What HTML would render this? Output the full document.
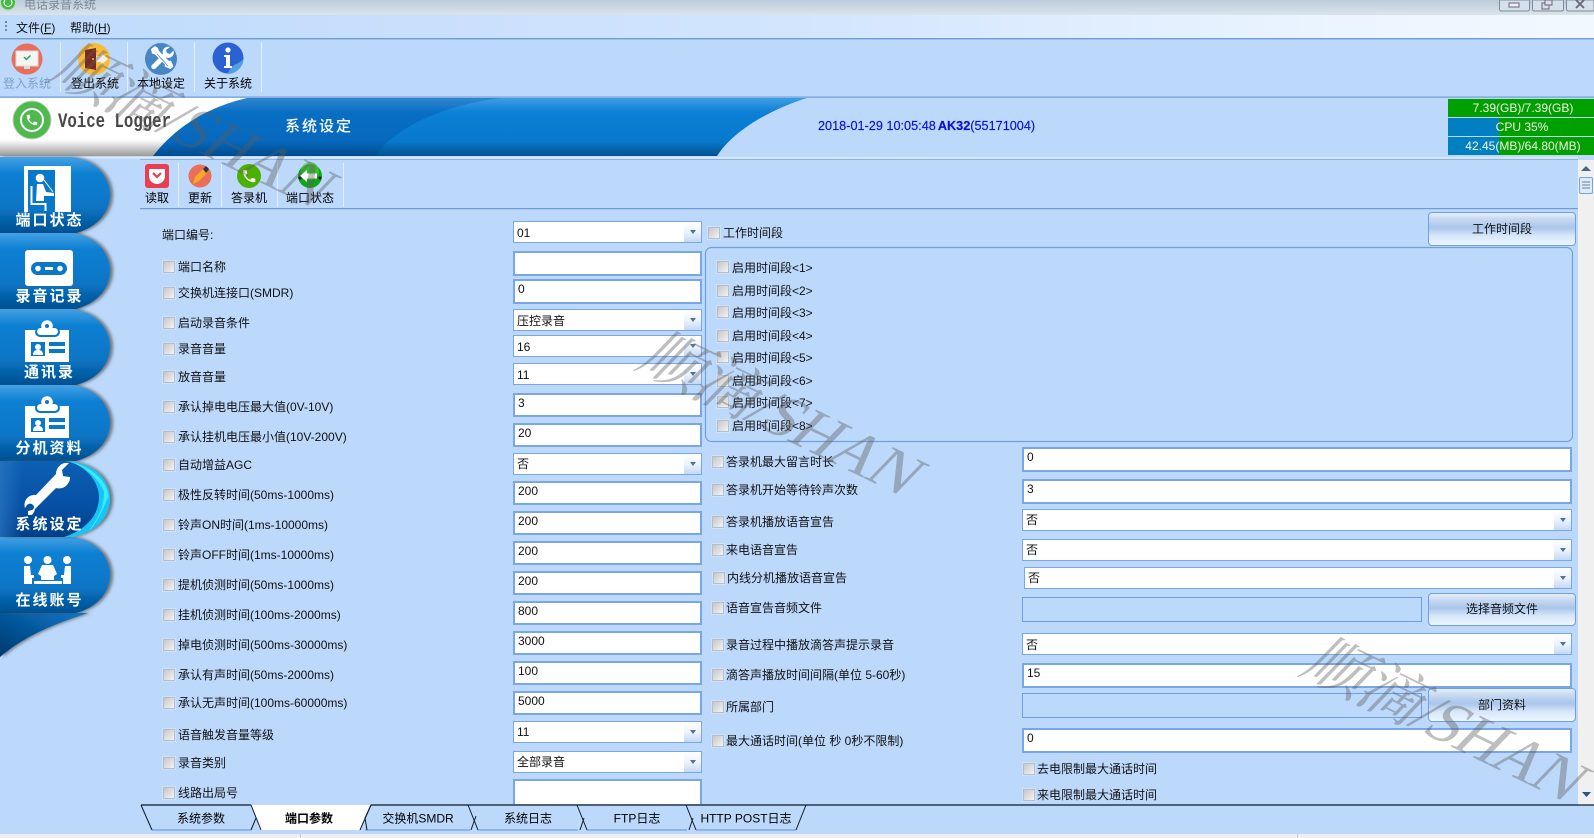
<!DOCTYPE html>
<html lang="zh"><head><meta charset="utf-8"><title>电话录音系统</title>
<style>
html,body{margin:0;padding:0}
body{width:1594px;height:838px;position:relative;overflow:hidden;background:#bcd9fc;font:12px/14px "Liberation Sans","Noto Sans CJK SC",sans-serif;color:#111}
.l{position:absolute;white-space:nowrap;line-height:14px}
.c{position:absolute;width:10px;height:10px;border:1px solid #aebfd6;outline:1px solid #d3e0f2;background:linear-gradient(135deg,#c6c6c6,#f4f4f4)}
.i{position:absolute;box-sizing:border-box;left:513px;width:189px;height:24px;background:#fff;border:2px solid #79a6e6;padding-left:3px;line-height:17px;white-space:nowrap}
.r{left:1022px;width:550px}
.b{border-width:1.5px;height:22px;line-height:21px}
.b:after{content:"";position:absolute;right:0;top:0;bottom:0;width:17px;background:linear-gradient(#fff 0,#edf4fd 50%,#c3d8f5 100%)}
.b:before{content:"";position:absolute;z-index:1;right:5px;top:8px;border:3.5px solid transparent;border-top:4px solid #50709c;border-bottom:0}
.d{background:#bcd9fc;border-width:1.4px;border-color:#6f9fdc}
.btn{position:absolute;box-sizing:border-box;left:1428px;width:148px;border:1px solid #6f9fdc;border-radius:4px;background:linear-gradient(#e6eefa 0,#c6d8f0 20%,#a9c6ec 45%,#d6e6fa 70%,#eef6ff 100%);text-align:center}
svg{position:absolute;left:0;top:0}
</style></head><body>

<svg width="1594" height="838" viewBox="0 0 1594 838" font-family="'Liberation Sans','Noto Sans CJK SC',sans-serif" font-size="12">
<defs>
<linearGradient id="ti" x1="0" y1="0" x2="0" y2="1"><stop offset="0" stop-color="#bccbd9"/><stop offset="1" stop-color="#dbe4ec"/></linearGradient>
<linearGradient id="me" x1="0" y1="0" x2="1" y2="0"><stop offset="0" stop-color="#bedafc"/><stop offset=".5" stop-color="#d2e5fd"/><stop offset=".85" stop-color="#ecf5ff"/><stop offset="1" stop-color="#f2f8ff"/></linearGradient>
<linearGradient id="bl" x1="0" y1="0" x2="0" y2="1"><stop offset="0" stop-color="#3f9ee2"/><stop offset=".25" stop-color="#0b80d6"/><stop offset=".75" stop-color="#0878cc"/><stop offset="1" stop-color="#00538f"/></linearGradient>
<linearGradient id="wh" x1="0" y1="0" x2="0" y2="1"><stop offset="0" stop-color="#fff"/><stop offset=".72" stop-color="#fff"/><stop offset=".85" stop-color="#d0d0d0"/><stop offset="1" stop-color="#9a9a9a"/></linearGradient>
<linearGradient id="tb" x1="0" y1="0" x2="0" y2="1"><stop offset="0" stop-color="#45a2e4"/><stop offset=".22" stop-color="#0b7fd2"/><stop offset=".65" stop-color="#0a76c6"/><stop offset="1" stop-color="#004f90"/></linearGradient>
<linearGradient id="ts" x1="0" y1="0" x2="0" y2="1"><stop offset="0" stop-color="#0c60b4"/><stop offset=".6" stop-color="#0650a4"/><stop offset="1" stop-color="#003e88"/></linearGradient>
<linearGradient id="tsl" x1="0" y1="0" x2="1" y2="0"><stop offset="0" stop-color="#2c78c4" stop-opacity=".7"/><stop offset="1" stop-color="#2c78c4" stop-opacity="0"/></linearGradient>
<linearGradient id="sw" x1="1" y1="0" x2="0" y2="1"><stop offset="0" stop-color="#0b78c8"/><stop offset="1" stop-color="#00386f"/></linearGradient>
<filter id="sh" x="-10%" y="-10%" width="125%" height="120%"><feDropShadow dx="3" dy="0" stdDeviation="1.5" flood-color="#555" flood-opacity=".75"/></filter>
<path id="ph" d="M6.62 10.79c1.44 2.83 3.76 5.14 6.59 6.59l2.2-2.2c.27-.27.67-.36 1.02-.24 1.12.37 2.33.57 3.57.57.55 0 1 .45 1 1V20c0 .55-.45 1-1 1-9.39 0-17-7.61-17-17 0-.55.45-1 1-1h3.5c.55 0 1 .45 1 1 0 1.25.2 2.45.57 3.57.11.35.03.74-.25 1.02l-2.2 2.2z"/>
<path id="tab" d="M0 0H72C96 3 110 20 110 38C110 56 96 71 76 76H0Z"/>
<g id="badge"><rect x="25" y="14" width="44" height="32" fill="#fff"/><rect x="35" y="11" width="25" height="10" rx="5" fill="#0a78c8"/><rect x="37" y="12" width="21" height="7" rx="3.5" fill="#fff"/><circle cx="47" cy="10" r="5.8" fill="#fff"/><circle cx="47" cy="10" r="2" fill="#0a78c8"/><rect x="31" y="26" width="14" height="14" fill="#0a78c8"/><circle cx="38" cy="31" r="3" fill="#fff"/><path d="M33 39c0-4 2-5 5-5s5 1 5 5z" fill="#fff"/><rect x="49" y="26" width="16" height="4" fill="#0a78c8"/><rect x="49" y="33" width="16" height="4" fill="#0a78c8"/></g>
</defs>

<!-- title bar -->
<rect width="1594" height="15" fill="url(#ti)"/>
<circle cx="8" cy="2.500" r="7.500" fill="#48b848" stroke="#b9dcb9"/><circle cx="8" cy="2.500" r="4" fill="none" stroke="#fff"/>
<text x="24" y="8.500" fill="#7c8894">电话录音系统</text>
<g fill="#d6e0ea" stroke="#7d8b9a"><path d="M1499.500 0V9q0 2 2 2h26q2 0 2-2V0z"/><path d="M1532.500 0V9q0 2 2 2h27q2 0 2-2V0z"/><path d="M1566.500 0V9q0 2 2 2H1594V0z"/></g>
<rect x="1509" y="3" width="10" height="4" fill="#eef" stroke="#667"/>
<rect x="1542" y="3" width="7" height="6" fill="none" stroke="#667"/><rect x="1545" y="0" width="7" height="5" fill="#dde" stroke="#667"/>
<path d="M1576 0L1584 8M1584 0L1576 8" stroke="#667" stroke-width="1.800"/>
<!-- menu -->
<rect y="15" width="1594" height="23" fill="url(#me)"/>
<g fill="#6a8ab0"><rect x="5" y="21" width="2" height="2"/><rect x="5" y="25" width="2" height="2"/><rect x="5" y="29" width="2" height="2"/></g>
<text x="16" y="32" fill="#111">文件(<tspan text-decoration="underline">F</tspan>)</text>
<text x="70" y="32" fill="#111">帮助(<tspan text-decoration="underline">H</tspan>)</text>
<rect y="38" width="1594" height="1.400" fill="#6f9bd6"/>
<rect y="96.500" width="1594" height="1.200" fill="#6f9bd6"/>
<!-- toolbar separators -->
<g fill="#e4effd"><rect x="60" y="42" width="1" height="50"/><rect x="127" y="42" width="1" height="50"/><rect x="194" y="42" width="1" height="50"/><rect x="261" y="42" width="1" height="50"/></g>
<!-- icon login -->
<circle cx="27" cy="59" r="15.500" fill="#e8705a"/>
<rect x="16" y="51" width="22" height="15" fill="#f4f4f4" stroke="#d8d8d8"/><rect x="24" y="66" width="6" height="3" fill="#ddd"/><path d="M24 57l2.500 2.500 4-4" fill="none" stroke="#30a060" stroke-width="1.500"/>
<!-- icon logout -->
<circle cx="94" cy="59" r="16" fill="#f9bc36"/>
<path d="M85 50l11-2v22l-11-2z" fill="#7b2a20"/><circle cx="93" cy="59" r="1" fill="#f9bc36"/><path d="M96 56h5v-3l7 6-7 6v-3h-5z" fill="#f4f0e8"/>
<!-- icon tools -->
<circle cx="161" cy="59" r="16" fill="#4786c4"/>
<g fill="#fff"><path d="M170 47a5.500 5.500 0 0 0-7 7l-11 11a2.200 2.200 0 0 0 3.500 3.500l11-11a5.500 5.500 0 0 0 7-7l-3.500 3.500-3-1-1-3z"/><path d="M151 49l4-3 3 2 1 3 10 10 2-0.500 2.500 6-3 2.500-6-2.500 0.500-2-10-10-3-1z"/></g>
<path d="M168 66l-11-12" stroke="#4786c4" stroke-width=".8"/>
<!-- icon info -->
<circle cx="228" cy="58" r="15.500" fill="#2a62d2"/><path d="M228 74c8 0 15-7 15-15c-4 6-12 4-15 15z" fill="#52a0e4"/>
<circle cx="228" cy="50" r="2.600" fill="#fff"/><path d="M224 55h6v11h2v2h-8v-2h2v-9h-2z" fill="#fff"/>
<g text-anchor="middle"><text x="27" y="87.500" fill="#7e9fc6">登入系统</text><text x="95" y="87.500">登出系统</text><text x="161" y="87.500">本地设定</text><text x="228" y="87.500">关于系统</text></g>

<!-- banner -->
<rect x="0" y="98" width="260" height="58" fill="url(#wh)"/>
<path d="M153 156C175 128 205 108 247 98H807C775 108 735 128 717 156Z" fill="url(#bl)"/>
<path d="M153 156C175 128 205 108 247 98H500C440 106 395 128 375 156Z" fill="#00328a" opacity=".22"/>
<circle cx="32" cy="120" r="19" fill="#4fb94f" stroke="#b9dcb9" stroke-width="1"/>
<circle cx="32" cy="120" r="11" fill="none" stroke="#fff" stroke-width="2"/>
<use href="#ph" fill="#fff" transform="translate(25,113) scale(.58)"/>
<text x="58" y="127" font-size="20" font-weight="bold" font-family="'Liberation Mono',monospace" fill="#484848" textLength="113" lengthAdjust="spacingAndGlyphs">Voice Logger</text>
<text x="319" y="131" font-size="15" fill="#fff" text-anchor="middle" letter-spacing="2" font-weight="500">系统设定</text>
<text x="818" y="130" fill="#0d0dd4" font-size="12.700" stroke="#0d0dd4" stroke-width=".15">2018-01-29 10:05:48<tspan font-weight="bold" dx="2">AK32</tspan>(55171004)</text>
<rect x="0" y="157" width="1578" height="1.500" fill="#dfeaf8"/>
<rect x="140" y="159" width="1438" height="1" fill="#8fb2e2"/>

<!-- stats -->
<rect x="1448" y="99" width="146" height="18" fill="#00a000"/>
<rect x="1448" y="118" width="146" height="18" fill="#00a000"/><rect x="1448" y="118" width="51" height="18" fill="#0080c0"/>
<rect x="1448" y="137" width="146" height="18" fill="#00a000"/><rect x="1448" y="137" width="51" height="18" fill="#0080c0"/>
<g fill="#f6f6e8" text-anchor="middle"><text x="1523" y="112">7.39(GB)/7.39(GB)</text><text x="1522" y="131">CPU 35%</text><text x="1523" y="150">42.45(MB)/64.80(MB)</text></g>

<!-- side tabs -->
<path d="M0 613H88C60 622 25 635 0 657Z" fill="url(#sw)" filter="url(#sh)"/>
<g filter="url(#sh)">
<use href="#tab" fill="url(#tb)" y="157"/>
<use href="#tab" fill="url(#tb)" y="233"/>
<use href="#tab" fill="url(#tb)" y="309"/>
<use href="#tab" fill="url(#tb)" y="385"/>
<use href="#tab" fill="url(#tb)" y="537"/>
</g>
<g filter="url(#sh)">
<path d="M0 461H68C96 464 110 481 110 499C110 517 96 532 72 537H0Z" fill="#16c4f6"/>
</g>
<path d="M68 461C92 466 108 482 108.500 497C104 505 100 520 88 532C100 516 104 505 104 492C100 480 85 466 68 461Z" fill="#36eefa"/>
<path d="M0 461H66C86 465 99 482 99 497C99 515 86 530 64 537H0Z" fill="url(#ts)"/>
<rect x="0" y="461" width="22" height="76" fill="url(#tsl)"/>

<!-- tab 1 icon -->
<rect x="24" y="166" width="47" height="46" fill="#fff"/>
<rect x="28" y="170" width="27" height="42" fill="#0a78c8"/>
<circle cx="40" cy="178" r="4.300" fill="#fff"/>
<path d="M37 184h6l3 8 8 1v3H44v5h-8z" fill="#fff"/>
<path d="M31.500 186v18h14v7" fill="none" stroke="#fff" stroke-width="2"/>
<path d="M44 180l9 12" stroke="#fff" fill="none"/>
<!-- tab 2 icon -->
<rect x="25" y="250" width="48" height="36" rx="3" fill="#fff"/>
<rect x="31" y="262" width="36" height="13" rx="6.500" fill="#0a78c8"/>
<circle cx="38" cy="268.500" r="2.800" fill="#fff"/><circle cx="60" cy="268.500" r="2.800" fill="#fff"/><rect x="45" y="267" width="8" height="3" fill="#fff"/>
<!-- tab 3,4 icons -->
<use href="#badge" y="316"/>
<use href="#badge" y="392"/>
<!-- wrench -->
<path d="M70 477a11 11 0 0 1-14 11l-21 21a10 10 0 0 1 -1 3l-2 3 -4 0 0-4 4-1a3 3 0 0 0 1-5a4 4 0 0 0-6 0l-2 3a10 10 0 0 1 11-13l20-21a11 11 0 0 1 13-11l-7 7 1 6 6 1z" fill="#fff"/>
<!-- people -->
<g fill="#fff"><circle cx="28" cy="560" r="4"/><circle cx="47.500" cy="560" r="4"/><circle cx="67" cy="560" r="4"/><path d="M24 566h6l1 9h3v3h-2v6h-8z"/><path d="M71 566h-6l-1 9h-3v3h2v6h8z"/><path d="M42 565h11l4 9-3 2v4H41v-4l-3-2z"/><rect x="34" y="581" width="28" height="3"/></g>
<g fill="#fff" font-size="15" font-weight="bold" text-anchor="middle" letter-spacing="2">
<text x="49.500" y="225">端口状态</text><text x="49.500" y="301">录音记录</text><text x="49.500" y="377">通讯录</text><text x="49.500" y="453">分机资料</text><text x="49.500" y="529">系统设定</text><text x="49.500" y="605">在线账号</text>
</g>

<!-- sub toolbar -->
<rect x="140" y="208" width="1438" height="1.200" fill="#6f9bd6"/>
<g fill="#e4effd"><rect x="178" y="163" width="1" height="44"/><rect x="221" y="163" width="1" height="44"/><rect x="277" y="163" width="1" height="44"/><rect x="343" y="163" width="1" height="44"/></g>
<rect x="145" y="164" width="24" height="24" rx="3" fill="#ec3c52"/>
<path d="M149 169h16v7a8 8 0 0 1-16 0z" fill="#fff"/><path d="M153 173l4 4 4-4" fill="none" stroke="#ec3c52" stroke-width="2.200"/>
<circle cx="200" cy="176" r="11.500" fill="#ea6f59"/>
<path d="M193 184l2-7 8-8 4 4-8 8z" fill="#f8a828"/><path d="M203 169l3-3 3 3-3 4z" fill="#333"/>
<circle cx="249" cy="176" r="12" fill="#4cb000"/>
<use href="#ph" fill="#fff" transform="translate(241,168) scale(.68)"/>
<circle cx="310" cy="176" r="12" fill="#10a818"/><circle cx="310" cy="171" r="9" fill="#50d040" opacity=".6"/>
<path d="M300 176l7-6v3.500h10v5h-10v3.500z" fill="#fff"/><circle cx="300" cy="178" r="1.600" fill="#123"/><circle cx="320" cy="178" r="1.600" fill="#123"/>
<g text-anchor="middle"><text x="157" y="202">读取</text><text x="200" y="202">更新</text><text x="249" y="202">答录机</text><text x="310" y="202">端口状态</text></g>

<!-- work panel -->
<rect x="705.500" y="247.500" width="867" height="194" rx="6" fill="#bcd9fc" stroke="#6f9fdc" stroke-width="1.200"/>

<!-- scrollbar -->
<rect x="1578" y="160" width="16" height="645" fill="#f0f0f0"/>
<path d="M1581 171l5-5 5 5z" fill="#46668c"/>
<rect x="1579.500" y="177.500" width="13" height="16" rx="1.500" fill="#dcebfb" stroke="#7fa3cf"/>
<path d="M1582 182h8M1582 185h8M1582 188h8" stroke="#6a7f98"/>
<path d="M1582 792h9l-4.500 5z" fill="#2a5488"/>

<!-- bottom -->
<rect y="834" width="1594" height="4" fill="#eeeeee"/>
<rect x="300" y="834" width="1" height="4" fill="#ccc"/><rect x="1297" y="834" width="1" height="4" fill="#ccc"/>
<path d="M251 805H371L360 830H260Z" fill="#fff"/>
<path d="M141 805H251M371 805H1594" stroke="#0c1a2c" stroke-width="1.200"/>
<g fill="none" stroke="#5c8fd8" stroke-width="1"><path d="M152 830H251"/><path d="M365 830H470"/><path d="M478 830H578"/><path d="M587 830H687"/><path d="M696 830H796"/></g>
<g fill="none" stroke="#0c1a2c"><path d="M141 805L152 830"/><path d="M251 805L261 830"/><path d="M371 805L360 830"/><path d="M371 805L365 818 367 830"/><path d="M468 805L478 830"/><path d="M471 830L476 816"/><path d="M577 805L587 830"/><path d="M580 830L584 818"/><path d="M686 805L696 830"/><path d="M689 830L693 818"/><path d="M806 805L796 830"/><path d="M251 830L256 818"/></g>
<g text-anchor="middle"><text x="201" y="822.500">系统参数</text><text x="309" y="822.500" font-weight="bold">端口参数</text><text x="418" y="822.500">交换机SMDR</text><text x="528" y="822.500">系统日志</text><text x="637" y="822.500">FTP日志</text><text x="746" y="822.500">HTTP POST日志</text></g>
</svg>

<!-- left labels -->
<div class="l" style="left:162px;top:228px">端口编号:</div>
<i class="c" style="left:163px;top:261px"></i><div class="l" style="left:178px;top:260px">端口名称</div>
<i class="c" style="left:163px;top:287px"></i><div class="l" style="left:178px;top:286px">交换机连接口(SMDR)</div>
<i class="c" style="left:163px;top:317px"></i><div class="l" style="left:178px;top:316px">启动录音条件</div>
<i class="c" style="left:163px;top:343px"></i><div class="l" style="left:178px;top:342px">录音音量</div>
<i class="c" style="left:163px;top:371px"></i><div class="l" style="left:178px;top:370px">放音音量</div>
<i class="c" style="left:163px;top:401px"></i><div class="l" style="left:178px;top:400px">承认掉电电压最大值(0V-10V)</div>
<i class="c" style="left:163px;top:431px"></i><div class="l" style="left:178px;top:430px">承认挂机电压最小值(10V-200V)</div>
<i class="c" style="left:163px;top:459px"></i><div class="l" style="left:178px;top:458px">自动增益AGC</div>
<i class="c" style="left:163px;top:489px"></i><div class="l" style="left:178px;top:488px">极性反转时间(50ms-1000ms)</div>
<i class="c" style="left:163px;top:519px"></i><div class="l" style="left:178px;top:518px">铃声ON时间(1ms-10000ms)</div>
<i class="c" style="left:163px;top:549px"></i><div class="l" style="left:178px;top:548px">铃声OFF时间(1ms-10000ms)</div>
<i class="c" style="left:163px;top:579px"></i><div class="l" style="left:178px;top:578px">提机侦测时间(50ms-1000ms)</div>
<i class="c" style="left:163px;top:609px"></i><div class="l" style="left:178px;top:608px">挂机侦测时间(100ms-2000ms)</div>
<i class="c" style="left:163px;top:639px"></i><div class="l" style="left:178px;top:638px">掉电侦测时间(500ms-30000ms)</div>
<i class="c" style="left:163px;top:669px"></i><div class="l" style="left:178px;top:668px">承认有声时间(50ms-2000ms)</div>
<i class="c" style="left:163px;top:697px"></i><div class="l" style="left:178px;top:696px">承认无声时间(100ms-60000ms)</div>
<i class="c" style="left:163px;top:729px"></i><div class="l" style="left:178px;top:728px">语音触发音量等级</div>
<i class="c" style="left:163px;top:757px"></i><div class="l" style="left:178px;top:756px">录音类别</div>
<i class="c" style="left:163px;top:787px"></i><div class="l" style="left:178px;top:786px">线路出局号</div>

<!-- left inputs -->
<div class="i b" style="top:221px;line-height:22px">01</div>
<div class="i" style="top:251px;height:25px"></div>
<div class="i" style="top:279px;height:25px">0</div>
<div class="i b" style="top:309px;line-height:22px">压控录音</div>
<div class="i b" style="top:335px;line-height:22px">16</div>
<div class="i b" style="top:363px;line-height:22px">11</div>
<div class="i" style="top:393px">3</div>
<div class="i" style="top:423px">20</div>
<div class="i b" style="top:453px">否</div>
<div class="i" style="top:481px">200</div>
<div class="i" style="top:511px">200</div>
<div class="i" style="top:541px">200</div>
<div class="i" style="top:571px">200</div>
<div class="i" style="top:601px">800</div>
<div class="i" style="top:631px">3000</div>
<div class="i" style="top:661px">100</div>
<div class="i" style="top:691px">5000</div>
<div class="i b" style="top:721px">11</div>
<div class="i b" style="top:751px">全部录音</div>
<div class="i" style="top:779px;border-bottom:0;height:25px"></div>

<!-- right top -->
<i class="c" style="left:708px;top:227px"></i><div class="l" style="left:723px;top:226px">工作时间段</div>
<div class="btn" style="top:212px;height:34px;line-height:32px">工作时间段</div>
<i class="c" style="left:717px;top:261px"></i><div class="l" style="left:732px;top:261px">启用时间段&lt;1&gt;</div>
<i class="c" style="left:717px;top:285px"></i><div class="l" style="left:732px;top:284px">启用时间段&lt;2&gt;</div>
<i class="c" style="left:717px;top:306px"></i><div class="l" style="left:732px;top:306px">启用时间段&lt;3&gt;</div>
<i class="c" style="left:717px;top:330px"></i><div class="l" style="left:732px;top:329px">启用时间段&lt;4&gt;</div>
<i class="c" style="left:717px;top:351px"></i><div class="l" style="left:732px;top:351px">启用时间段&lt;5&gt;</div>
<i class="c" style="left:717px;top:375px"></i><div class="l" style="left:732px;top:374px">启用时间段&lt;6&gt;</div>
<i class="c" style="left:717px;top:396px"></i><div class="l" style="left:732px;top:396px">启用时间段&lt;7&gt;</div>
<i class="c" style="left:717px;top:420px"></i><div class="l" style="left:732px;top:419px">启用时间段&lt;8&gt;</div>

<!-- right labels -->
<i class="c" style="left:712px;top:456px"></i><div class="l" style="left:726px;top:455px">答录机最大留言时长</div>
<i class="c" style="left:712px;top:484px"></i><div class="l" style="left:726px;top:483px">答录机开始等待铃声次数</div>
<i class="c" style="left:712px;top:516px"></i><div class="l" style="left:726px;top:515px">答录机播放语音宣告</div>
<i class="c" style="left:712px;top:544px"></i><div class="l" style="left:726px;top:543px">来电语音宣告</div>
<i class="c" style="left:713px;top:572px"></i><div class="l" style="left:727px;top:571px">内线分机播放语音宣告</div>
<i class="c" style="left:712px;top:602px"></i><div class="l" style="left:726px;top:601px">语音宣告音频文件</div>
<i class="c" style="left:712px;top:639px"></i><div class="l" style="left:726px;top:638px">录音过程中播放滴答声提示录音</div>
<i class="c" style="left:712px;top:669px"></i><div class="l" style="left:726px;top:668px">滴答声播放时间间隔(单位 5-60秒)</div>
<i class="c" style="left:712px;top:701px"></i><div class="l" style="left:726px;top:700px">所属部门</div>
<i class="c" style="left:712px;top:735px"></i><div class="l" style="left:726px;top:734px">最大通话时间(单位 秒 0秒不限制)</div>
<i class="c" style="left:1023px;top:763px"></i><div class="l" style="left:1037px;top:762px">去电限制最大通话时间</div>
<i class="c" style="left:1023px;top:789px"></i><div class="l" style="left:1037px;top:788px">来电限制最大通话时间</div>

<!-- right inputs -->
<div class="i r" style="top:447px;height:25px">0</div>
<div class="i r" style="top:479px;height:25px">3</div>
<div class="i r b" style="top:509px">否</div>
<div class="i r b" style="top:539px">否</div>
<div class="i r b" style="top:567px;left:1024px;width:548px">否</div>
<div class="i r d" style="top:597px;height:25px;width:400px"></div>
<div class="btn" style="top:593px;height:33px;line-height:31px">选择音频文件</div>
<div class="i r b" style="top:633px;line-height:22px">否</div>
<div class="i r" style="top:663px;height:25px">15</div>
<div class="i r d" style="top:693px;height:25px;width:400px"></div>
<div class="btn" style="top:688px;height:34px;line-height:32px">部门资料</div>
<div class="i r" style="top:728px;height:25px">0</div>

<!-- watermarks -->
<svg width="1594" height="838" viewBox="0 0 1594 838" style="pointer-events:none">
<g fill="#5c5c5c" fill-opacity=".4" font-family="'Liberation Serif','Noto Serif CJK SC',serif" font-size="62">
<text transform="translate(46,78) rotate(26) skewX(-18)" letter-spacing="-2">顺滴/SHAN</text>
<text transform="translate(634,366) rotate(26) skewX(-18)" letter-spacing="-2">顺滴/SHAN</text>
<text transform="translate(1298,672) rotate(26) skewX(-18)" letter-spacing="-2">顺滴/SHAN</text>
</g>
</svg>
</body></html>
